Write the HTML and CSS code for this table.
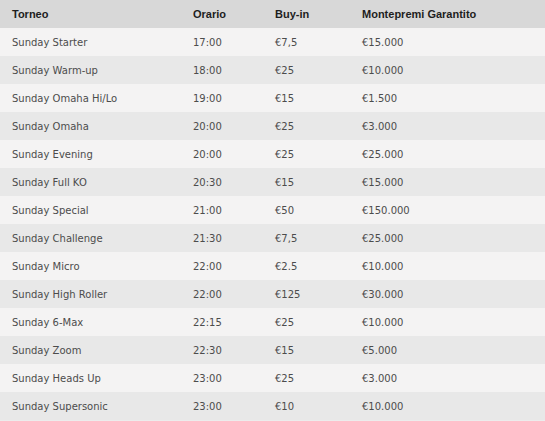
FILE: index.html
```html
<!DOCTYPE html>
<html lang="it">
<head>
<meta charset="utf-8">
<title>Tornei domenicali</title>
<link rel="stylesheet" href="styles.css">
</head>
<body>
<table class="schedule">
  <colgroup>
    <col class="c-name"><col class="c-time"><col class="c-buy"><col class="c-prize">
  </colgroup>
  <thead>
    <tr><th>Torneo</th><th>Orario</th><th>Buy-in</th><th>Montepremi Garantito</th></tr>
  </thead>
  <tbody>
    <tr><td>Sunday Starter</td><td>17:00</td><td>€7,5</td><td>€15.000</td></tr>
    <tr><td>Sunday Warm-up</td><td>18:00</td><td>€25</td><td>€10.000</td></tr>
    <tr><td>Sunday Omaha Hi/Lo</td><td>19:00</td><td>€15</td><td>€1.500</td></tr>
    <tr><td>Sunday Omaha</td><td>20:00</td><td>€25</td><td>€3.000</td></tr>
    <tr><td>Sunday Evening</td><td>20:00</td><td>€25</td><td>€25.000</td></tr>
    <tr><td>Sunday Full KO</td><td>20:30</td><td>€15</td><td>€15.000</td></tr>
    <tr><td>Sunday Special</td><td>21:00</td><td>€50</td><td>€150.000</td></tr>
    <tr><td>Sunday Challenge</td><td>21:30</td><td>€7,5</td><td>€25.000</td></tr>
    <tr><td>Sunday Micro</td><td>22:00</td><td>€2.5</td><td>€10.000</td></tr>
    <tr><td>Sunday High Roller</td><td>22:00</td><td>€125</td><td>€30.000</td></tr>
    <tr><td>Sunday 6-Max</td><td>22:15</td><td>€25</td><td>€10.000</td></tr>
    <tr><td>Sunday Zoom</td><td>22:30</td><td>€15</td><td>€5.000</td></tr>
    <tr><td>Sunday Heads Up</td><td>23:00</td><td>€25</td><td>€3.000</td></tr>
    <tr><td>Sunday Supersonic</td><td>23:00</td><td>€10</td><td>€10.000</td></tr>
  </tbody>
</table>
</body>
</html>
```
FILE: styles.css
```css
html, body {
  margin: 0;
  padding: 0;
  background: #ececec;
}
.schedule {
  width: 545px;
  border-collapse: collapse;
  table-layout: fixed;
}
.c-name { width: 181px; }
.c-time { width: 82px; }
.c-buy { width: 87px; }
.c-prize { width: 195px; }
.schedule th,
.schedule td {
  height: 28px;
  padding: 0 0 0 12px;
  text-align: left;
  vertical-align: middle;
  box-sizing: border-box;
  white-space: nowrap;
}
.schedule th {
  background: #d8d8d8;
  font-family: "Liberation Sans", Arial, sans-serif;
  font-weight: bold;
  font-size: 11px;
  color: #1e1e1e;
}
.schedule td {
  font-family: "DejaVu Sans", Verdana, sans-serif;
  font-size: 10px;
  color: #4c4c4c;
}
.schedule tbody tr:nth-child(odd) td { background: #f4f3f3; }
.schedule tbody tr:nth-child(even) td { background: #e8e8e8; }
```
